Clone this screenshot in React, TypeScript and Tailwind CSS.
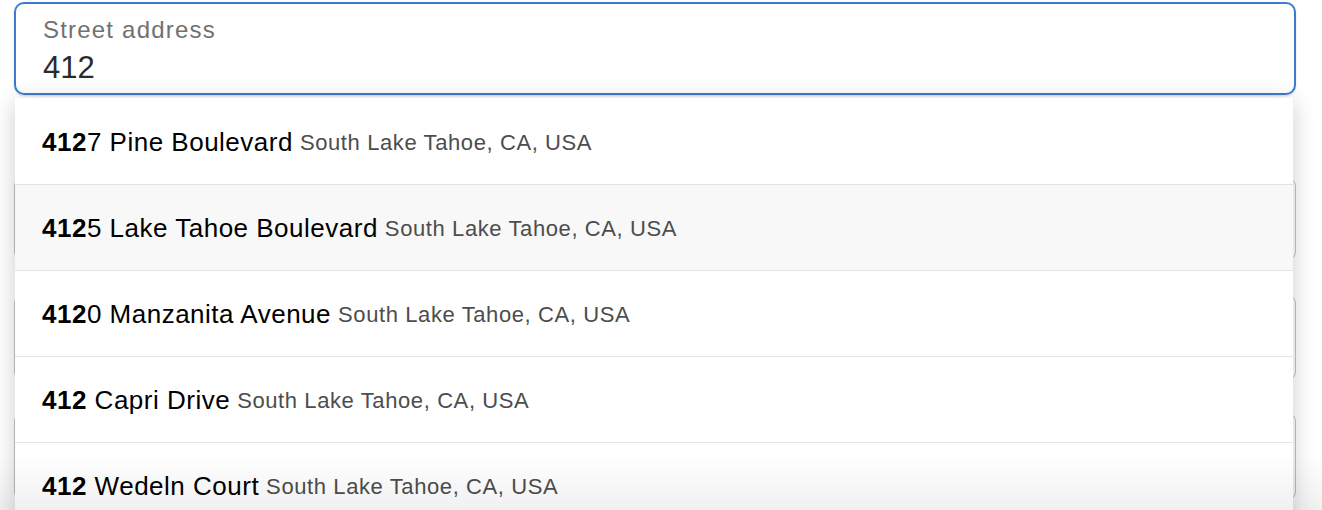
import React from "react";

const rows = [
  { match: "412", rest: "7 Pine Boulevard" },
  { match: "412", rest: "5 Lake Tahoe Boulevard", active: true },
  { match: "412", rest: "0 Manzanita Avenue" },
  { match: "412", rest: " Capri Drive" },
  { match: "412", rest: " Wedeln Court" },
];

export default function App() {
  return (
    <div className="relative w-[1322px] h-[510px] overflow-hidden bg-white font-['Liberation_Sans',Arial,sans-serif]">
      <div className="flex flex-col pt-[2px] pl-[14px] w-[1296px]">
        <div className="h-[93px] border-2 border-[#3d7bd1] rounded-[10px] px-[27px] pt-[12px] shadow-[0_1px_2px_rgba(0,0,0,0.15)]">
          <div className="text-[24px] leading-[28px] tracking-[1.2px] text-[#717171]">Street address</div>
          <div className="mt-[6px] text-[31px] leading-[36px] text-[#2b2b2b]">412</div>
        </div>
        <div className="mt-[83px] h-[82px] border border-[#c4c4c4] rounded-[8px]" />
        <div className="mt-[35px] h-[85px] border border-[#c4c4c4] rounded-[8px]" />
        <div className="mt-[33px] h-[87px] border border-[#c4c4c4] rounded-[8px]" />
      </div>

      <div className="absolute left-[15px] top-[98px] w-[1278px] bg-white shadow-[0_4px_22px_rgba(0,0,0,0.2)]">
        {rows.map((r, i) => (
          <div
            key={i}
            className={
              "flex items-center pl-[27px] border-b border-[#e3e3e3] " +
              (i === 0 ? "h-[87px] pt-[2px] " : "h-[86px] pt-[2px] ") +
              (r.active ? "bg-[#f8f8f8]" : "bg-white")
            }
          >
            <span className="text-[26px] tracking-[0.5px] text-black whitespace-pre">
              <b className="font-bold">{r.match}</b>
              {r.rest}
            </span>
            <span className="ml-[7px] text-[22px] tracking-[0.6px] text-[#4d4d4d]">
              South Lake Tahoe, CA, USA
            </span>
          </div>
        ))}
      </div>

      <div className="pointer-events-none absolute left-0 right-0 bottom-0 h-[55px] bg-gradient-to-b from-transparent to-[rgba(0,0,0,0.06)]" />
    </div>
  );
}
